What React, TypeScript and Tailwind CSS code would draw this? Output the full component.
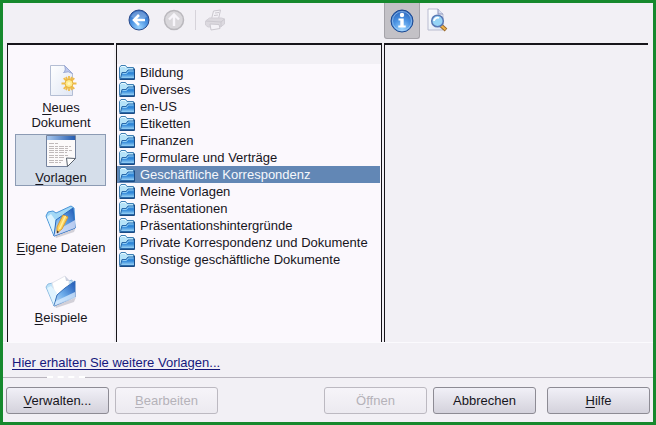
import React, { useState } from "react";

const folders = [
  "Bildung",
  "Diverses",
  "en-US",
  "Etiketten",
  "Finanzen",
  "Formulare und Verträge",
  "Geschäftliche Korrespondenz",
  "Meine Vorlagen",
  "Präsentationen",
  "Präsentationshintergründe",
  "Private Korrespondenz und Dokumente",
  "Sonstige geschäftliche Dokumente",
];

// Shared gradients, referenced by id from the icons below
const Gradients = () => (
  <svg className="absolute h-0 w-0" aria-hidden="true">
    <defs>
      <radialGradient id="ball" cx="0.5" cy="0.85" r="0.85">
        <stop offset="0" stopColor="#9cd4ff" />
        <stop offset="0.5" stopColor="#4a92e2" />
        <stop offset="1" stopColor="#2a62b8" />
      </radialGradient>
      <linearGradient id="folder" x1="0" y1="0" x2="0" y2="1">
        <stop offset="0" stopColor="#3f8fd6" />
        <stop offset="0.45" stopColor="#2f86d8" />
        <stop offset="1" stopColor="#a4daf8" />
      </linearGradient>
      <linearGradient id="open" x1="0" y1="1" x2="1" y2="0">
        <stop offset="0" stopColor="#cbe6fc" />
        <stop offset="0.45" stopColor="#6cabea" />
        <stop offset="1" stopColor="#1c55b4" />
      </linearGradient>
      <linearGradient id="paper" x1="0" y1="0" x2="1" y2="1">
        <stop offset="0" stopColor="#ffffff" />
        <stop offset="1" stopColor="#dfe6f4" />
      </linearGradient>
      <linearGradient id="titlebar" x1="0" y1="0" x2="1" y2="0">
        <stop offset="0" stopColor="#a9c8ee" />
        <stop offset="1" stopColor="#245bb0" />
      </linearGradient>
    </defs>
  </svg>
);

const BackIcon = () => (
  <svg width="22" height="22" viewBox="0 0 22 22">
    <circle cx="11" cy="11" r="10" fill="url(#ball)" stroke="#2a4b8c" />
    <path d="M3 8a8.500 8.500 0 0 1 16 0Q11 12 3 8" fill="#fff" opacity="0.25" />
    <path d="M17 11H6M11 6L6 11l5 5" fill="none" stroke="#fff" strokeWidth="2.600" />
  </svg>
);

const UpIcon = () => (
  <svg width="22" height="22" viewBox="0 0 22 22">
    <circle cx="11" cy="11" r="9.500" fill="#d9d7db" stroke="#bab8bd" strokeWidth="1.500" />
    <path d="M11 17V6M6 10.500L11 5.500l5 5" fill="none" stroke="#f7f5fa" strokeWidth="2.400" />
  </svg>
);

const PrintIcon = () => (
  <svg width="22" height="22" viewBox="0 0 22 22" fill="none" stroke="#cbc8cf">
    <path d="M7.500 10l2-8 7-1-2 9" fill="#f4f2f7" />
    <path d="M1.500 12l4-3h12l3 1v5l-4 3H4l-2.500-2z" fill="#dcd9df" stroke="#d2cfd6" />
    <path d="M2 12l15 1 3.500-3M17 13v5" />
    <path d="M6 15l9 .5 1 4-9 1.500z" fill="#f4f2f7" />
    <path d="M11 4l4-.5M10 6.500l4-.5" />
  </svg>
);

const InfoIcon = () => (
  <svg width="24" height="24" viewBox="0 0 24 24">
    <circle cx="12" cy="12" r="11" fill="url(#ball)" stroke="#1c478f" />
    <circle cx="12" cy="12" r="9.500" fill="none" stroke="#b4d8f8" opacity="0.6" />
    <circle cx="12" cy="6" r="2.200" fill="#fff" />
    <path d="M8.500 9.500h5.200v7h2v2h-7.400v-2h2v-5H8.500z" fill="#fff" />
  </svg>
);

const PreviewIcon = () => (
  <svg width="22" height="24" viewBox="0 0 22 24">
    <path d="M2 1h10l5 5v16H2z" fill="url(#paper)" stroke="#b9bcd0" />
    <path d="M12 1v5h5" fill="#d5dbee" stroke="#8e95ba" />
    <path d="M15 17.500l5 4.500" stroke="#9a6a2c" strokeWidth="4" />
    <path d="M15 17.500l4.500 4" stroke="#f0b44c" strokeWidth="2" />
    <circle cx="11.500" cy="13" r="5.800" fill="#96d4f6" stroke="#5878b4" strokeWidth="1.500" />
    <path d="M8 13a3.500 3.500 0 0 1 5-3" fill="none" stroke="#fff" strokeWidth="1.800" />
  </svg>
);

const FolderIcon = () => (
  <svg width="16" height="16" viewBox="0 0 16 16">
    <path d="M.5 2.500L2 .5h4.500L8 2.500h6.500v11h-14z" fill="#b5e2f8" stroke="#3f7fb4" />
    <path d="M1.500 2.500l1-1H6l1 1.500" fill="none" stroke="#e9faff" />
    <path d="M1.500 13.500l1.500-6h4L9 5h6.500v8.500z" fill="url(#folder)" stroke="#2a69aa" />
    <path d="M3.500 8.500h4l2-2.500h5" fill="none" stroke="#8fccf4" />
    <path d="M.5 14.500h15V3.500" fill="none" stroke="#1c4c84" />
  </svg>
);

const NewDocIcon = () => (
  <svg width="32" height="32" viewBox="0 0 32 32">
    <path d="M5.500.5h14l8 8v22h-22z" fill="url(#paper)" stroke="#b4bed4" />
    <path d="M19.500.5q2 5-1 7 5-2 9 1z" fill="#bcc8ee" stroke="#9aa8d4" />
    <path
      d="M24 11v15M16.500 18.500h15M18.700 13.200l10.600 10.600M29.300 13.200L18.700 23.800M21 12l6 13M27 12l-6 13"
      stroke="#f0bc48"
      strokeWidth="1.800"
    />
    <circle cx="24" cy="18.500" r="4" fill="#ffec8c" stroke="#e6b040" />
    <circle cx="24" cy="18.500" r="1.500" fill="#fff6c4" />
  </svg>
);

const TemplateIcon = () => (
  <svg width="32" height="32" viewBox="0 0 32 32">
    <path d="M1.500.5h29v23l-8 8h-21z" fill="#fcfafa" stroke="#74829d" />
    <path d="M2 1h28v4H2z" fill="url(#titlebar)" />
    <path
      d="M4 8.500h10M4 11.500h22M4 13.500h20M4 15.500h23M4 17.500h18M4 20.500h19M4 22.500h16M4 25.500h14M4 27.500h12"
      stroke="#c0baba"
      strokeDasharray="5 1 3 1"
    />
    <path d="M22.500 31.500l-1-8.500 9 .5z" fill="#fff" stroke="#59616c" />
  </svg>
);

const OwnFilesIcon = () => (
  <svg width="32" height="34" viewBox="0 0 32 34">
    <path d="M10 31l21-9-2 5-18 6z" fill="#aaa8b4" opacity="0.5" />
    <path d="M1 11l2-4 5-1 3 2L26 1l3 2 1 20L9 31z" fill="#a2d8f6" stroke="#4a94d8" />
    <path d="M2 12l4-3 5 7L9 30z" fill="#dcf4ff" />
    <path d="M11 15L28 3l2 20L9 31z" fill="url(#open)" stroke="#2769bc" />
    <path d="M11 26l19-11v8L9 31z" fill="#d5ddf8" opacity="0.8" />
    <path d="M18 10l5 2-6 12-5 4 0-6z" fill="#ffd35c" stroke="#d89c38" />
    <path d="M20.500 11l-6 13" stroke="#fff0a0" strokeWidth="1.500" />
    <path d="M12 28.500v-3l2 1.500z" fill="#3c3840" />
  </svg>
);

const SamplesIcon = () => (
  <svg width="32" height="34" viewBox="0 0 32 34">
    <path d="M10 31l21-9-2 5-18 6z" fill="#aaa8b4" opacity="0.5" />
    <path d="M1 12l2-3 5-1 3 2 16-5 2 17L9 31z" fill="#bce2f8" stroke="#8fbde2" />
    <path d="M7 8L20 1l4 5v12L12 26z" fill="#fff" stroke="#e2e4ec" />
    <path d="M20 1l1 5h4z" fill="#cbd0df" />
    <path d="M2 13l4-2 6 7-3 12z" fill="#e0f4ff" />
    <path d="M12 20L20 13l10-7v16L9 31z" fill="url(#open)" stroke="#356fb8" />
    <path d="M11 26l19-9v6L9 31z" fill="#dceeff" opacity="0.75" />
  </svg>
);

const categories = [
  { id: "new", icon: <NewDocIcon />, label: <><u>N</u>eues<br />Dokument</> },
  { id: "templates", icon: <TemplateIcon />, label: <><u>V</u>orlagen</> },
  { id: "own", icon: <OwnFilesIcon />, label: <><u>E</u>igene Dateien</> },
  { id: "samples", icon: <SamplesIcon />, label: <><u>B</u>eispiele</> },
];

const DialogButton = ({
  children,
  disabled = false,
}: {
  children: React.ReactNode;
  disabled?: boolean;
}) => (
  <button
    type="button"
    disabled={disabled}
    className="h-[27px] w-[103px] rounded-[3px] border border-[#8d8b94] bg-linear-to-b from-[#f1f0f7] to-[#d4d2dc] underline-offset-2 disabled:border-[#bcb9c1] disabled:from-[#f6f4f9] disabled:to-[#eceaf0] disabled:text-[#b5b2b9]"
  >
    {children}
  </button>
);

const App = () => {
  const [category, setCategory] = useState("templates");
  const [folder, setFolder] = useState("Geschäftliche Korrespondenz");

  return (
    <div className="flex min-h-screen flex-col border-3 border-[#16892d] bg-[#f2f0f5] font-['Liberation_Sans',sans-serif] text-[13px] leading-[15px] text-[#17151c]">
      <Gradients />

      <header className="grid h-10 grid-cols-[113px_268px_1fr]">
        <div className="col-start-2 flex h-[34px] items-center pl-3">
          <button type="button" aria-label="Zurück">
            <BackIcon />
          </button>
          <button type="button" aria-label="Nach oben" disabled className="ml-[13px]">
            <UpIcon />
          </button>
          <span className="ml-[10px] h-5 w-px bg-[#d6d3da]" />
          <button type="button" aria-label="Drucken" disabled className="ml-2">
            <PrintIcon />
          </button>
        </div>
        <div className="flex items-start">
          <button
            type="button"
            aria-label="Dokumenteigenschaften"
            aria-pressed="true"
            className="flex h-9 w-[36px] items-center justify-center rounded-b-[3px] border border-t-0 border-[#a5a3a9] bg-[#c3c1c6]"
          >
            <InfoIcon />
          </button>
          <button type="button" aria-label="Vorschau" className="flex h-[34px] items-center pl-[6px]">
            <PreviewIcon />
          </button>
        </div>
      </header>

      <main className="grid flex-1 grid-cols-[107px_266px_1fr] gap-x-[2px] border-b border-[#fbfafd] pr-[5px] pl-1">
        <nav className="grid grid-rows-[70px_70px_70px_auto] content-start justify-items-center border-t-2 border-l border-t-[#17151a] border-l-[#17151a] bg-[#fbf8fd] pt-[19px] pr-[2px]">
          {categories.map(({ id, icon, label }) => (
            <button
              key={id}
              type="button"
              onClick={() => setCategory(id)}
              className={`flex w-[91px] flex-col items-center self-start border pl-[2px] whitespace-nowrap underline-offset-2 ${
                category === id
                  ? "border-[#8c9bb4] bg-[#d5deea]"
                  : "border-transparent"
              }`}
            >
              <span className="flex h-[35px] items-start">{icon}</span>
              <span>{label}</span>
            </button>
          ))}
        </nav>

        <section className="border-t-2 border-r border-l border-t-[#17151a] border-r-[#17151a] border-l-[#17151a] bg-[#fbf8fd]">
          <div className="h-[19px] bg-[#f2f0f5]" />
          <ul className="pr-px">
            {folders.map((name) => (
              <li key={name}>
                <button
                  type="button"
                  onClick={() => setFolder(name)}
                  className={`flex h-[17px] w-full items-center gap-[5px] pl-[2px] text-left whitespace-nowrap ${
                    folder === name ? "bg-[#6287b5] text-[#f5f7fc]" : ""
                  }`}
                >
                  <FolderIcon />
                  {name}
                </button>
              </li>
            ))}
          </ul>
        </section>

        <section
          aria-label="Dokumenteigenschaften"
          className="border-t-2 border-l border-t-[#17151a] border-l-[#17151a]"
        />
      </main>

      <div className="flex h-[33px] items-center pt-[6px] pl-[9px]">
        <a href="#vorlagen" className="text-[#16187c] underline underline-offset-2">
          Hier erhalten Sie weitere Vorlagen...
        </a>
      </div>

      {/* separator with its broken piece on the left */}
      <div className="flex items-end">
        <span className="h-px w-[44px] bg-[#b9b5be]" />
        <span className="w-[38px] border-t-2 border-dashed border-white" />
        <span className="h-px flex-1 bg-[#b9b5be]" />
      </div>

      <footer className="flex h-11 items-center gap-[6px] px-[3px]">
        <DialogButton>
          <u>V</u>erwalten...
        </DialogButton>
        <DialogButton disabled>
          <u>B</u>earbeiten
        </DialogButton>
        <div className="ml-auto flex gap-[6px]">
          <DialogButton disabled>
            Ö<u>f</u>fnen
          </DialogButton>
          <DialogButton>Abbrechen</DialogButton>
        </div>
        <div className="pl-[5px]">
          <DialogButton>
            <u>H</u>ilfe
          </DialogButton>
        </div>
      </footer>
    </div>
  );
};

export default App;
